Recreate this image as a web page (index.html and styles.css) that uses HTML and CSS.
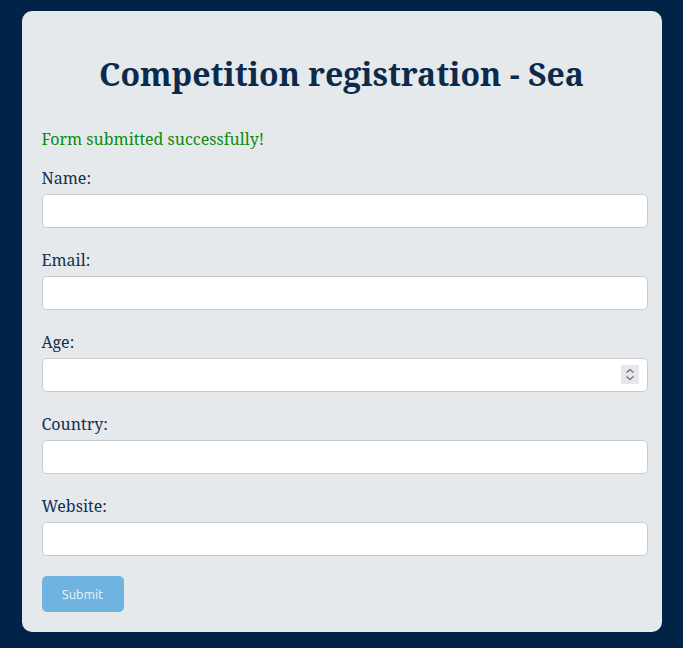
FILE: index.html
```html
<!DOCTYPE html>
<html lang="en">
<head>
<meta charset="utf-8">
<title>Competition registration - Sea</title>
<link rel="stylesheet" href="styles.css">
</head>
<body>
<div class="card">
  <h1 class="title">Competition registration - Sea</h1>
  <p class="message">Form submitted successfully!</p>
  <form class="form">
    <div class="group">
      <label class="label" for="name">Name:</label>
      <input class="field" id="name" type="text">
    </div>
    <div class="group">
      <label class="label" for="email">Email:</label>
      <input class="field" id="email" type="email">
    </div>
    <div class="group">
      <label class="label" for="age">Age:</label>
      <div class="number-wrap">
        <input class="field" id="age" type="text">
        <span class="spinner">
          <svg width="18" height="19" viewBox="0 0 18 19"><path d="M5.5 7.5 L9 4.5 L12.5 7.5" fill="none" stroke="#707075" stroke-width="1.3"/><path d="M5.5 11.5 L9 14.5 L12.5 11.5" fill="none" stroke="#707075" stroke-width="1.3"/></svg>
        </span>
      </div>
    </div>
    <div class="group">
      <label class="label" for="country">Country:</label>
      <input class="field" id="country" type="text">
    </div>
    <div class="group group-last">
      <label class="label" for="website">Website:</label>
      <input class="field" id="website" type="text">
    </div>
    <button class="submit" type="button">Submit</button>
  </form>
</div>
</body>
</html>
```
FILE: styles.css
```css
html, body {
  margin: 0;
  padding: 0;
}
body {
  background: #012347;
  font-family: "Noto Serif", "DejaVu Serif", serif;
  padding: 11px 0 16px;
}
.card {
  width: 600px;
  margin: 0 auto;
  padding: 20px;
  background: #e5e9ec;
  border-radius: 10px;
}
.title {
  margin: 21px 0 32px;
  font-size: 32px;
  line-height: 44px;
  font-weight: 700;
  text-align: center;
  color: #0b2a4c;
}
.message {
  margin: 0 0 17px;
  font-size: 16px;
  line-height: 22px;
  color: #0b8a0b;
}
.form {
  margin: 0;
}
.group {
  margin-bottom: 21px;
}
.group-last {
  margin-bottom: 20px;
}
.label {
  display: block;
  margin-bottom: 5px;
  font-size: 16px;
  line-height: 22px;
  color: #13304f;
}
.field {
  display: block;
  height: 34px;
  padding: 8px 2px;
  border: 1px solid #c9cbcd;
  border-radius: 5px;
  background: #ffffff;
  font-size: 13px;
  box-sizing: border-box;
  width: calc(100% + 6px);
}
.number-wrap {
  position: relative;
}
.spinner {
  position: absolute;
  right: 3px;
  top: 7px;
  width: 18px;
  height: 19px;
  background: #e7e6ea;
  display: flex;
}
.submit {
  display: block;
  width: 82px;
  padding: 0;
  height: 36px;
  border: none;
  border-radius: 5px;
  background: #6fb3e0;
  color: #eaf4fb;
  font-family: "Ubuntu", "Open Sans", "DejaVu Sans", sans-serif;
  font-size: 13px;
}
```
